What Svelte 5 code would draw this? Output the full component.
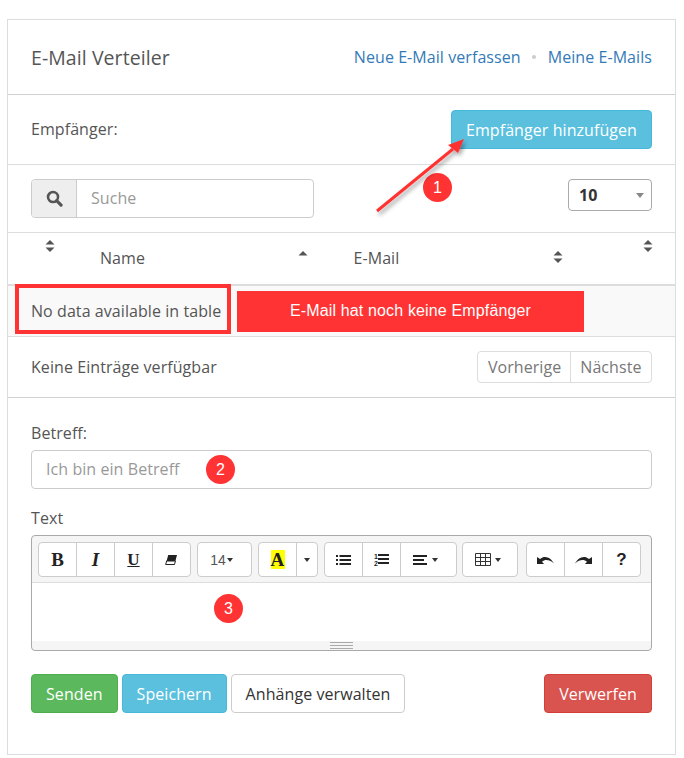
<script>
  const headers = [
    { label: "", width: 69, icon: "both", right: 22, top: true },
    { label: "Name", width: 254, icon: "up", right: 23 },
    { label: "E-Mail", width: 252, icon: "both", right: 19 },
    { label: "", width: 93, icon: "both", right: 22, top: true }
  ];
</script>

<div class="page">
  <div class="panel">
    <header class="row head">
      <h1>E-Mail Verteiler</h1>
      <nav>
        <a href="#new">Neue E-Mail verfassen</a>
        <span class="dot"></span>
        <a href="#mine">Meine E-Mails</a>
      </nav>
    </header>

    <div class="row recipients">
      <span>Empfänger:</span>
      <button class="btn info big">Empfänger hinzufügen</button>
    </div>

    <div class="row filter">
      <div class="search">
        <span class="addon">
          <svg width="17" height="17" viewBox="0 0 16 16">
            <circle cx="6.6" cy="6.6" r="4.7" fill="none" stroke="#555" stroke-width="2.4" />
            <path d="M10 10l4.200 4.200" stroke="#555" stroke-width="3" stroke-linecap="round" />
          </svg>
        </span>
        <span class="placeholder">Suche</span>
      </div>
      <div class="select">
        <b>10</b>
        <i class="caret"></i>
      </div>
    </div>

    <div class="thead">
      {#each headers as h}
        <div class="th" class:top={h.top} style="width: {h.width}px">
          <span>{h.label}</span>
          <svg class="sort" style="right: {h.right}px" width="10" height="14" viewBox="0 0 10 14">
            <path d="M5 1l4.500 4.500h-9z" fill="#555" />
            {#if h.icon === "both"}
              <path d="M5 13L.5 8.500h9z" fill="#555" />
            {/if}
          </svg>
        </div>
      {/each}
    </div>

    <div class="empty">
      <div class="cell">No data available in table</div>
      <div class="banner">E-Mail hat noch keine Empfänger</div>
    </div>

    <div class="row pager">
      <span>Keine Einträge verfügbar</span>
      <div class="pages">
        <span>Vorherige</span>
        <span>Nächste</span>
      </div>
    </div>

    <form class="form">
      <label for="subject">Betreff:</label>
      <div class="subject" id="subject">
        <span class="placeholder">Ich bin ein Betreff</span>
        <span class="badge b2">2</span>
      </div>

      <div class="text-label">Text</div>
      <div class="editor">
        <div class="toolbar">
          <div class="group">
            <span class="tool"><b class="glyph serif">B</b></span>
            <span class="tool"><b class="glyph serif"><em>I</em></b></span>
            <span class="tool"><b class="glyph serif under">U</b></span>
            <span class="tool">
              <svg width="13" height="12" viewBox="0 0 13 12">
                <path d="M3.200 1H12l-1.600 6H1.600z" fill="#222" />
                <path d="M1.600 7h8.800l-.9 3.500H.7z" fill="#fff" stroke="#222" />
              </svg>
            </span>
          </div>
          <div class="group">
            <span class="tool size">14<i class="mini"></i></span>
          </div>
          <div class="group">
            <span class="tool"><b class="glyph serif mark">A</b></span>
            <span class="tool narrow"><i class="mini"></i></span>
          </div>
          <div class="group">
            <span class="tool">
              <svg width="15" height="12" viewBox="0 0 15 12">
                <path d="M0 1h2v2H0zM0 5h2v2H0zM0 9h2v2H0zM3.500 1H15v2H3.500zM3.500 5H15v2H3.500zM3.500 9H15v2H3.500z" fill="#222" />
              </svg>
            </span>
            <span class="tool">
              <svg width="15" height="13" viewBox="0 0 15 13">
                <text x="0" y="6" class="num">1</text>
                <text x="0" y="13" class="num">2</text>
                <path d="M4 1h11v2H4zM4 5h11v2H4zM4 9h11v2H4z" fill="#222" />
              </svg>
            </span>
            <span class="tool wide">
              <svg width="14" height="12" viewBox="0 0 14 12">
                <path d="M0 1h14v2H0zM0 5h11v2H0zM0 9h14v2H0z" fill="#222" />
              </svg>
              <i class="mini"></i>
            </span>
          </div>
          <div class="group tables">
            <span class="tool table">
              <svg width="16" height="13" viewBox="0 0 16 13">
                <path d="M.5.500h15v12H.5zM.5 4.500h15M.5 8.500h15M5.500.5v12M10.500.5v12" fill="none" stroke="#333" />
              </svg>
              <i class="mini"></i>
            </span>
          </div>
          <div class="group history">
            <span class="tool">
              <svg width="17" height="8" viewBox="0 0 17 8">
                <path d="M0 1v7h7L5 5.800C8 3.300 12 3.300 17 7.500 14 1.800 8-1.500 3 3z" fill="#222" />
              </svg>
            </span>
            <span class="tool">
              <svg width="17" height="8" viewBox="0 0 17 8">
                <path d="M17 1v7h-7l2-2.200C9 3.300 5 3.300 0 7.500 3 1.800 9-1.500 14 3z" fill="#222" />
              </svg>
            </span>
            <span class="tool"><b class="glyph help">?</b></span>
          </div>
        </div>
        <div class="area"></div>
        <div class="resize"><span></span></div>
      </div>

      <div class="actions">
        <button class="btn success">Senden</button>
        <button class="btn info">Speichern</button>
        <button class="btn plain">Anhänge verwalten</button>
        <button class="btn danger">Verwerfen</button>
      </div>
    </form>
  </div>

  <span class="badge b1">1</span>
  <span class="badge b3">3</span>
  <svg class="arrow" width="110" height="90" viewBox="0 0 110 90">
    <defs>
      <filter id="soft" x="-20%" y="-20%" width="150%" height="150%">
        <feDropShadow dx="2" dy="3" stdDeviation="2" flood-color="#000" flood-opacity="0.35" />
      </filter>
    </defs>
    <g filter="url(#soft)">
      <path d="M6 77L82 15" stroke="#f33" stroke-width="3" fill="none" />
      <path d="M93 5L87 19 77 11z" fill="#f33" />
    </g>
  </svg>
</div>

<style>
  :global(body) {
    margin: 0;
    background: #fff;
  }

  .page {
    position: relative;
    width: 684px;
    height: 758px;
    padding: 19px 8px 0 7px;
    box-sizing: border-box;
    font-family: "Open Sans", sans-serif;
    font-size: 16px;
    letter-spacing: 0.07px;
    color: #555;
  }

  .panel {
    border: 1px solid #ddd;
    height: 736px;
    box-sizing: border-box;
  }

  .row {
    display: flex;
    align-items: center;
    justify-content: space-between;
    padding: 0 23px;
    border-bottom: 1px solid #ddd;
  }

  .head {
    height: 75px;
    box-sizing: border-box;
    border-bottom-color: #d0d0d0;
  }

  h1 {
    margin: 0;
    font-size: 19.5px;
    font-weight: 400;
  }

  nav {
    display: flex;
    align-items: center;
    gap: 11.500px;
  }

  a {
    color: #337ab7;
    text-decoration: none;
  }

  .dot {
    width: 4px;
    height: 4px;
    border-radius: 50%;
    background: #ccc;
  }

  .recipients {
    height: 70px;
    box-sizing: border-box;
  }

  .recipients > span {
    margin-bottom: 2px;
  }

  .filter {
    height: 68px;
    box-sizing: border-box;
    align-items: flex-start;
    padding-top: 14px;
  }

  .btn {
    height: 39px;
    padding: 0 14px;
    border: 1px solid transparent;
    border-radius: 4px;
    font: inherit;
    letter-spacing: inherit;
    color: #fff;
  }

  .big {
    width: 201px;
  }

  .info {
    background: #5bc0de;
    border-color: #46b8da;
  }

  .success {
    background: #5cb85c;
    border-color: #4cae4c;
  }

  .danger {
    background: #d9534f;
    border-color: #d43f3a;
    margin-left: auto;
  }

  .plain {
    background: #fff;
    border-color: #ccc;
    color: #333;
  }

  .search {
    display: flex;
    width: 283px;
    height: 39px;
    box-sizing: border-box;
    border: 1px solid #ccc;
    border-radius: 4px;
  }

  .addon {
    display: flex;
    align-items: center;
    justify-content: center;
    width: 44px;
    background: #eee;
    border-right: 1px solid #ccc;
    border-radius: 3px 0 0 3px;
  }

  .placeholder {
    color: #999;
    align-self: center;
    padding: 0 0 2px 14px;
  }

  .select {
    position: relative;
    display: flex;
    align-items: center;
    width: 84px;
    height: 32px;
    box-sizing: border-box;
    padding-left: 10px;
    border: 1px solid #aaa;
    border-radius: 4px;
    color: #333;
  }

  .caret {
    position: absolute;
    right: 7px;
    top: 13px;
    border: 4.500px solid transparent;
    border-top: 5px solid #888;
    border-bottom: 0;
  }

  .thead {
    display: flex;
    height: 53px;
    box-sizing: border-box;
    border-bottom: 2px solid #ddd;
  }

  .th {
    position: relative;
    box-sizing: border-box;
    padding: 14px 0 0 23px;
  }

  .sort {
    position: absolute;
    top: 17px;
  }

  .top .sort {
    top: 6px;
  }

  .empty {
    display: flex;
    align-items: center;
    position: relative;
    height: 51px;
    box-sizing: border-box;
    background: #f9f9f9;
    border-bottom: 1px solid #ddd;
  }

  .cell {
    margin: 0 0 4px 7px;
    padding-left: 12px;
    width: 216px;
    height: 50px;
    line-height: 46px;
    box-sizing: border-box;
    border: 4px solid #f33;
    white-space: nowrap;
    color: #555;
  }

  .banner {
    margin-left: 6px;
    width: 347px;
    height: 41px;
    line-height: 39px;
    text-align: center;
    background: #f33;
    color: #fff;
    font-family: "Liberation Sans", sans-serif;
    letter-spacing: 0.15px;
  }

  .pager {
    height: 61px;
    box-sizing: border-box;
    border-bottom-color: #d0d0d0;
  }

  .pages {
    display: flex;
    height: 32px;
    box-sizing: border-box;
    border: 1px solid #ddd;
    border-radius: 4px;
    color: #777;
  }

  .pages span {
    padding: 0 9.500px;
    line-height: 30px;
  }

  .pages span:first-child {
    padding-right: 8.500px;
  }

  .pages span + span {
    border-left: 1px solid #ddd;
  }

  .form {
    display: flex;
    flex-direction: column;
    padding: 24px 23px 0;
  }

  label,
  .text-label {
    line-height: 22px;
  }

  .subject {
    display: flex;
    position: relative;
    height: 39px;
    margin-top: 6px;
    box-sizing: border-box;
    border: 1px solid #ccc;
    border-radius: 4px;
  }

  .subject .placeholder {
    padding-bottom: 1px;
  }

  .text-label {
    margin-top: 18px;
  }

  .editor {
    margin-top: 6px;
    height: 116px;
    box-sizing: border-box;
    border: 1px solid #a9a9a9;
    border-radius: 4px;
    display: flex;
    flex-direction: column;
    background: #f5f5f5;
  }

  .toolbar {
    display: flex;
    gap: 6px;
    height: 47px;
    padding: 6px 6px 0;
    box-sizing: border-box;
    border-bottom: 1px solid #ddd;
  }

  .group {
    display: flex;
    height: 35px;
    box-sizing: border-box;
    border: 1px solid #ccc;
    border-radius: 4px;
    background: #fff;
  }

  .history {
    margin-left: 2px;
  }

  .tables {
    margin-left: -1px;
  }

  .tool {
    display: flex;
    align-items: center;
    justify-content: center;
    gap: 4px;
    width: 38px;
    box-sizing: border-box;
    color: #333;
  }

  .tool:first-child {
    width: 37px;
  }

  .tool + .tool {
    border-left: 1px solid #ccc;
  }

  .tool.size {
    width: 53px;
    padding-right: 6px;
    font-family: "Liberation Sans", sans-serif;
    font-size: 14px;
    gap: 1px;
    color: #555;
  }

  .narrow {
    width: 21px;
  }

  .wide {
    width: 56px;
    padding-right: 6px;
    gap: 5px;
  }

  .tool.table {
    width: 54px;
    padding-right: 5px;
  }

  .mini {
    border: 3.500px solid transparent;
    border-top: 4px solid #333;
    border-bottom: 0;
  }

  .glyph {
    font-size: 16px;
    color: #222;
  }

  .serif {
    font-family: "Liberation Serif", serif;
    font-size: 19px;
  }

  .under {
    text-decoration: underline;
    font-size: 17px;
  }

  .mark {
    background: #ff0;
    line-height: 19px;
    width: 14px;
    text-align: center;
  }

  .help {
    font-family: "Liberation Sans", sans-serif;
    font-size: 17px;
  }

  .num {
    font: bold 7px "Liberation Sans", sans-serif;
    fill: #222;
  }

  .area {
    flex: 1;
    background: #fff;
  }

  .resize {
    height: 9px;
    display: flex;
    justify-content: center;
    align-items: center;
  }

  .resize span {
    width: 23px;
    height: 5px;
    border-top: 1px solid #aaa;
    border-bottom: 1px solid #aaa;
    background: linear-gradient(#aaa, #aaa) center / 100% 1px no-repeat;
  }

  .actions {
    display: flex;
    gap: 4px;
    margin-top: 23px;
  }

  .badge {
    position: absolute;
    width: 29px;
    height: 29px;
    border-radius: 50%;
    background: #f33;
    color: #fff;
    text-align: center;
    line-height: 29px;
    font-family: "Liberation Sans", sans-serif;
    font-size: 16px;
  }

  .b1 {
    left: 423px;
    top: 173px;
  }

  .b2 {
    left: 174px;
    top: 4px;
  }

  .b3 {
    left: 214px;
    top: 594px;
  }

  .arrow {
    position: absolute;
    left: 371px;
    top: 134px;
  }
</style>
